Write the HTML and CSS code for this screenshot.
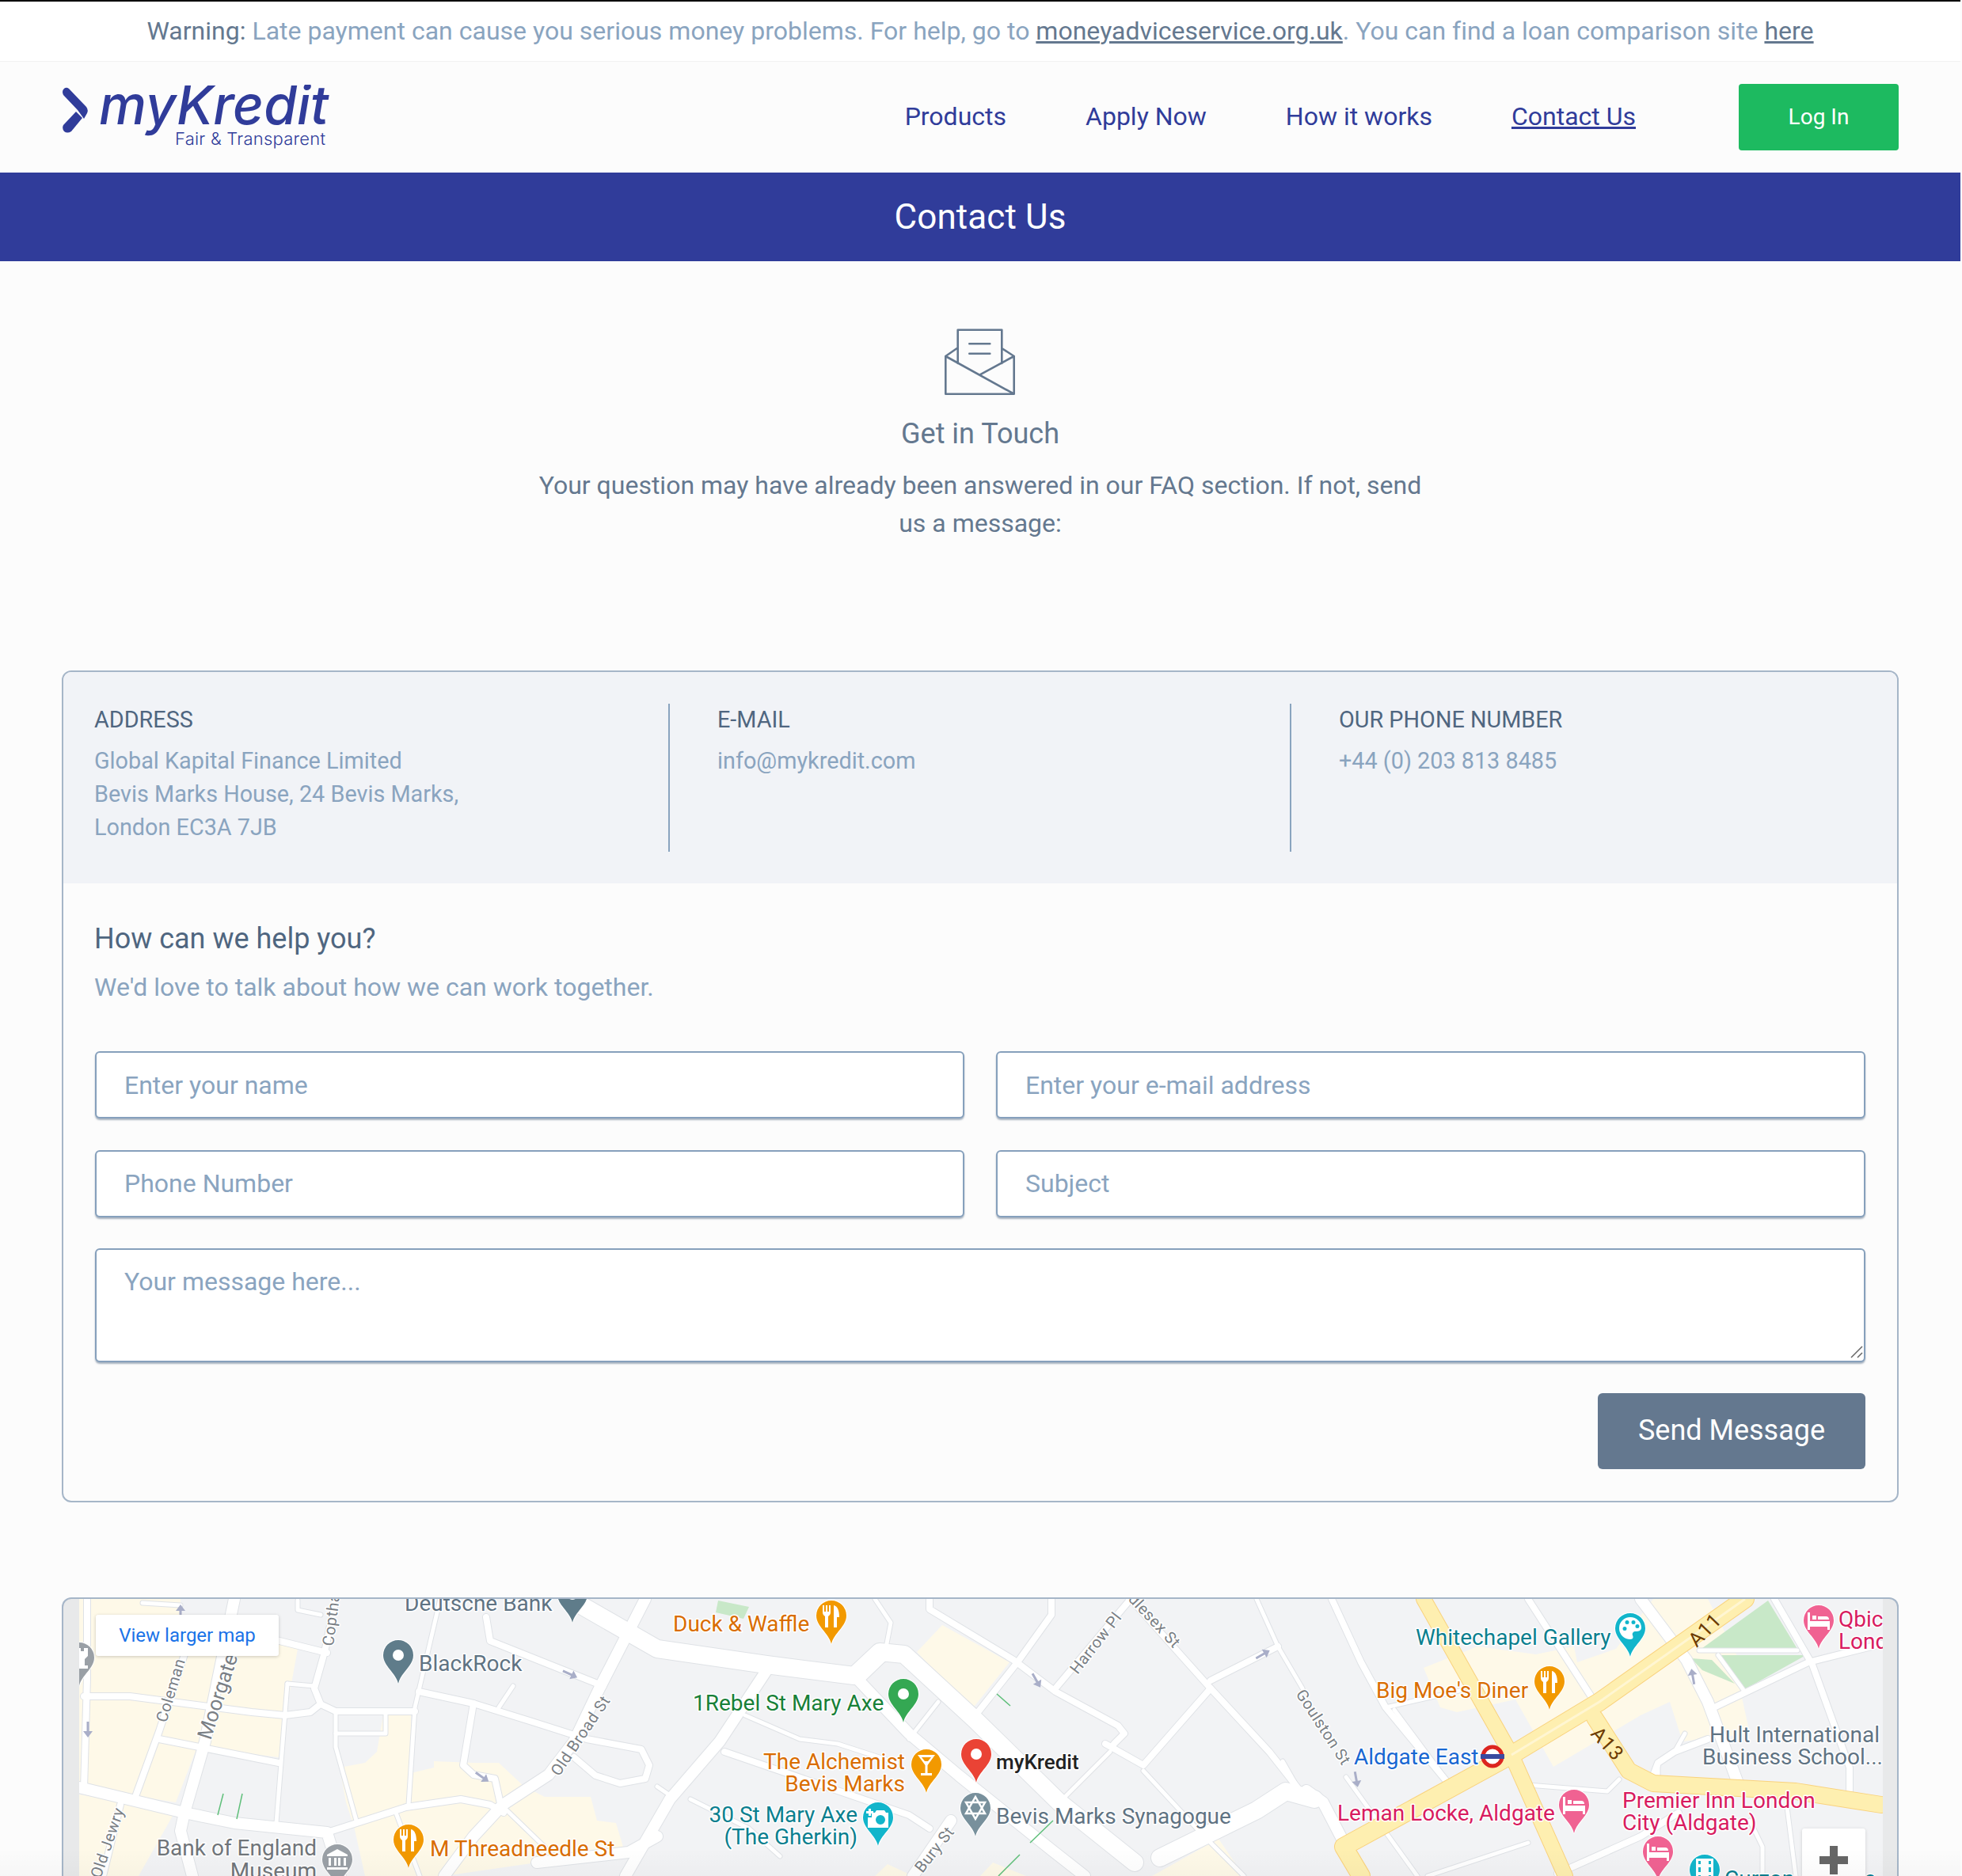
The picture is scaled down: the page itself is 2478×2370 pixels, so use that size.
FILE: index.html
```html
<!DOCTYPE html>
<html lang="en">
<head>
<meta charset="utf-8">
<title>Contact Us - myKredit</title>
<link rel="stylesheet" href="styles.css">
</head>
<body>
<div class="warning">
  <p><strong>Warning:</strong> Late payment can cause you serious money problems. For help, go to <a href="#">moneyadviceservice.org.uk</a>. You can find a loan comparison site <a href="#">here</a></p>
</div>
<header class="site-nav">
  <a class="logo" href="#" aria-label="myKredit">
    <svg width="340" height="84" viewBox="79 107 340 84">
      <path class="logo-fill" d="M80 113Q83 109 87 112L109 135Q112 139 110 143L106 150L98 139L80 120Q78 116 80 113Z"/>
      <path class="logo-fill" d="M96 141L104 149L90 166Q85 169 81 166Q78 162 80 158Z"/>
      <text class="logo-word" x="125" y="157" textLength="290" lengthAdjust="spacingAndGlyphs">myKredit</text>
      <text class="logo-tag" x="221" y="183" textLength="190">Fair &amp; Transparent</text>
    </svg>
  </a>
  <nav class="menu">
    <a href="#">Products</a>
    <a href="#">Apply Now</a>
    <a href="#">How it works</a>
    <a href="#" class="current">Contact Us</a>
  </nav>
  <a class="login" href="#">Log In</a>
</header>
<div class="banner"><h1>Contact Us</h1></div>
<section class="intro">
  <svg class="intro-icon" width="92" height="87" viewBox="0 0 92 87">
    <path d="M2.3 36V83.7H88.7V36M2.3 36L16.7 26M88.7 36L73.3 26M17.7 45V2.7H73.3V45M2.3 36L88.7 83.7M88.7 36L45.7 59.3M32.3 20.3H58.3M32.3 32.7H58.3"/>
  </svg>
  <h2>Get in Touch</h2>
  <p>Your question may have already been answered in our FAQ section. If not, send us a message:</p>
</section>
<main class="wrap">
  <section class="card">
    <div class="details">
      <div class="detail">
        <h3>ADDRESS</h3>
        <p>Global Kapital Finance Limited<br>Bevis Marks House, 24 Bevis Marks,<br>London EC3A 7JB</p>
      </div>
      <div class="detail">
        <h3>E-MAIL</h3>
        <p>info@mykredit.com</p>
      </div>
      <div class="detail">
        <h3>OUR PHONE NUMBER</h3>
        <p>+44 (0) 203 813 8485</p>
      </div>
    </div>
    <form class="form">
      <h2>How can we help you?</h2>
      <p class="lead">We'd love to talk about how we can work together.</p>
      <div class="fields">
        <input type="text" placeholder="Enter your name">
        <input type="text" placeholder="Enter your e-mail address">
        <input type="text" placeholder="Phone Number">
        <input type="text" placeholder="Subject">
        <div class="message">
          <textarea placeholder="Your message here..."></textarea>
          <svg class="grip" width="17" height="16" viewBox="0 0 17 16"><path d="M1 15L15 1M9 15L15 9"/></svg>
        </div>
      </div>
      <div class="actions"><button type="button">Send Message</button></div>
    </form>
  </section>
  <section class="map">
    <svg class="map-canvas" width="2278" height="350" viewBox="100 2020 2278 350">
      <defs>
        <path id="pin" d="M0 0C-3 -14 -19 -22 -19 -36A19 19 0 1 1 19 -36C19 -22 3 -14 0 0Z"/>
        <path id="arrow" d="M-10 -1.5H2V-6L10 0L2 6V1.5H-10Z"/>
        <g id="i-food"><path d="M-11 -49V-40C-11 -37 -9 -36 -8 -35V-21H-4V-35C-3 -36 -1 -37 -1 -40V-49H-3V-41H-5V-49H-7V-41H-9V-49Z"/><path d="M3 -49C8 -48 10 -42 10 -34H7V-21H3Z"/></g>
        <g id="i-bed"><path d="M-14 -46H-11V-35H14V-24H11V-28H-11V-24H-14Z"/><path d="M-8 -42H-3V-37H-8ZM-1 -41H9Q13 -41 13 -37H-1Z"/></g>
        <g id="i-palette"><path fill-rule="evenodd" d="M0 -50A14 14 0 1 0 0 -22C4 -22 4 -25 3 -27C2 -30 4 -32 7 -32C11 -32 14 -33 14 -37C14 -44 8 -50 0 -50ZM-7 -38A2.5 2.5 0 1 0 -7 -33A2.5 2.5 0 1 0 -7 -38ZM-4 -46A2.5 2.5 0 1 0 -4 -41A2.5 2.5 0 1 0 -4 -46ZM4 -46A2.5 2.5 0 1 0 4 -41A2.5 2.5 0 1 0 4 -46ZM9 -41A2.5 2.5 0 1 0 9 -36A2.5 2.5 0 1 0 9 -41Z"/></g>
        <g id="i-cocktail"><path fill-rule="evenodd" d="M-11 -48H11L1.5 -35V-25H7V-22H-7V-25H-1.5V-35ZM-6 -45L-2 -40H2L6 -45Z"/></g>
        <g id="i-camera"><path fill-rule="evenodd" d="M-8 -42H-4L-2 -45H8L10 -42H13V-23H-13V-36H-8ZM3 -39A6 6 0 1 0 3 -27A6 6 0 1 0 3 -39Z"/><path d="M-12 -47H-9V-44H-6V-41H-9V-38H-12V-41H-15V-44H-12Z"/></g>
        <g id="i-star" class="icon-line"><path d="M0 -50L12 -29H-12ZM0 -22L12 -43H-12Z"/></g>
        <g id="i-museum"><path d="M0 -49L13 -42V-40H-13V-42ZM-11 -38H-8V-28H-11ZM-4 -38H-1V-28H-4ZM1 -38H4V-28H1ZM8 -38H11V-28H8ZM-13 -26H13V-23H-13Z"/></g>
        <g id="i-film"><path fill-rule="evenodd" d="M-11 -50H11V-22H-11ZM-8 -47V-43H-5V-47ZM-8 -39V-33H-5V-39ZM-8 -29V-25H-5V-29ZM5 -47V-43H8V-47ZM5 -39V-33H8V-39ZM5 -29V-25H8V-29Z"/></g>
        <g id="i-rook"><path d="M-11 -48H-6V-44H-2V-48H2V-44H6V-48H11V-38L7 -34V-26H11V-22H-11V-26H-7V-34L-11 -38Z"/></g>
        <g id="w5">
          <path d="M180 2025L228 2028"/>
          <path d="M376 2022V2034L405 2040"/>
          <path d="M363 2127L349 2303"/>
          <path d="M363 2127L397 2130"/>
          <path d="M424 2163V2207L450 2300"/>
          <path d="M424 2190H487V2165"/>
          <path d="M556 2020L524 2157L516 2280"/>
          <path d="M500 2290L530 2370"/>
          <path d="M636 2283L700 2345"/>
          <path d="M648 2130L630 2157"/>
          <path d="M941 2167L1010 2197L1058 2203L1132 2227"/>
          <path d="M830 2257L849 2270"/>
          <path d="M872 2273L946 2310L985 2345"/>
          <path d="M1148 2197L1185 2150"/>
          <path d="M1089 2123L1116 2097"/>
          <path d="M1116 2097L1125 2050L1105 2020"/>
          <path d="M1402 2213L1338 2277"/>
          <path d="M1444 2237L1518 2317L1571 2370"/>
          <path d="M1645 2133L1614 2080L1587 2020"/>
          <path d="M1750 2157L1856 2133"/>
          <path d="M1761 2160L1830 2253"/>
          <path d="M1930 2255L2030 2263L2045 2248"/>
          <path d="M2210 2300L2226 2333V2370"/>
          <path d="M2257 2283L2268 2370"/>
          <path d="M1803 2370L1930 2328"/>
          <path d="M2094 2227L2094 2250"/>
          <path d="M2115 2213L2128 2190"/>
          <path d="M2146 2085H2270"/>
          <path d="M2170 2091L2202 2135"/>
          <path d="M1640 2260L1620 2225"/>
          <path d="M1700 2245L1790 2370"/>
        </g>
        <g id="w8">
          <path d="M106 2143H164L318 2163L360 2167L392 2163L402 2155"/>
          <path d="M201 2197L352 2227"/>
          <path d="M233 2090L201 2187L172 2267"/>
          <path d="M349 2072L413 2088"/>
          <path d="M424 2020L410 2087L397 2133L405 2153L424 2162H524"/>
          <path d="M529 2137L598 2152L672 2175L741 2197L810 2210L820 2230L815 2247L783 2253L752 2243L725 2220"/>
          <path d="M598 2152L585 2230L598 2242L625 2247L633 2283"/>
          <path d="M614 2043L619 2073L762 2130"/>
          <path d="M413 2315L513 2283L582 2273L619 2280L636 2290"/>
          <path d="M110 2020V2120L106 2260"/>
          <path d="M152 2280L130 2370"/>
          <path d="M915 2213L1148 2293L1174 2310"/>
          <path d="M1232 2167L1285 2100L1328 2040V2020"/>
          <path d="M1174 2020V2033L1280 2097L1333 2137L1412 2180L1420 2190L1407 2203"/>
          <path d="M1428 2020L1333 2133"/>
          <path d="M1428 2020L1529 2133L1603 2213L1640 2260"/>
          <path d="M1529 2123L1614 2080"/>
          <path d="M1529 2133L1444 2230L1396 2203"/>
          <path d="M1682 2020L1719 2100L1750 2157L1835 2260"/>
          <path d="M1930 2020L2014 2150"/>
          <path d="M2165 2157L2284 2100L2376 2077"/>
          <path d="M2241 2020L2289 2103L2336 2233V2270"/>
          <path d="M2088 2243L2094 2227L2115 2213L2157 2197"/>
          <path d="M1967 2367L2072 2320L2120 2290"/>
          <path d="M1671 2280L1720 2370"/>
        </g>
        <g id="w14">
          <path d="M296 2020L259 2200L233 2290L228 2313L243 2370"/>
          <path d="M100 2258L233 2290L296 2303L413 2315L430 2370"/>
          <path d="M815 2020L757 2133L725 2200L693 2242L635 2280L598 2320L561 2370"/>
          <path d="M678 2353L794 2340L830 2320"/>
          <path d="M973 2103L909 2200L846 2273L790 2370"/>
          <path d="M1079 2117L1148 2190L1211 2243L1328 2337L1370 2370"/>
          <path d="M1201 2300L1153 2370"/>
          <path d="M2072 2020L2130 2097L2157 2150L2194 2250"/>
          <path d="M1650 2262L1671 2277L1697 2327L1719 2370"/>
        </g>
        <g id="w20">
          <path d="M720 2020L830 2083L968 2103L1079 2117L1111 2087L1142 2090L1232 2173L1338 2277L1433 2353"/>
          <path d="M1465 2347L1587 2287L1624 2263L1660 2273"/>
        </g>
        <path id="y-a11" d="M2204 2020L2020 2150L1909 2217L1697 2333L1719 2370"/>
        <path id="y-ns" d="M1798 2020L1909 2217L1977 2370"/>
        <path id="y-a13" d="M2014 2170L2057 2237L2088 2253L2268 2263L2376 2280"/>
      </defs>
      <rect class="m-bg" x="100" y="2020" width="2278" height="350"/>
      <g class="m-beige">
        <polygon points="100,2020 228,2020 228,2040 376,2083 368,2127 360,2167 352,2220 249,2207 222,2277 100,2257"/>
        <polygon points="100,2267 222,2287 175,2370 100,2370"/>
        <polygon points="429,2233 461,2227 476,2213 484,2167 519,2167 519,2240 548,2233 548,2225 598,2227 630,2227 662,2257 688,2270 746,2270 754,2300 778,2303 789,2340 678,2353 561,2370 461,2370 447,2307 437,2277"/>
        <polygon points="1158,2087 1190,2053 1275,2100 1227,2160"/>
        <polygon points="1105,2370 1121,2355 1153,2370"/>
        <polygon points="1238,2370 1254,2353 1296,2370"/>
        <polygon points="1455,2370 1539,2323 1571,2370"/>
        <polygon points="1798,2107 1866,2080 1940,2090 1988,2080 1992,2100 2041,2083 2088,2020 2157,2020 2193,2090 2199,2140 2210,2190 2125,2200 2109,2150 2072,2167 1962,2232 1914,2147 1840,2163 1819,2157"/>
      </g>
      <g class="m-park">
        <polygon points="2233,2022 2270,2083 2146,2085"/>
        <polygon points="2170,2091 2281,2091 2202,2135"/>
        <polygon points="2136,2095 2162,2097 2191,2127 2150,2110"/>
        <polygon points="907,2022 946,2030 939,2045 904,2037"/>
      </g>
      <use href="#w5" class="case c5"/>
      <use href="#w8" class="case c8"/>
      <use href="#w14" class="case c14"/>
      <use href="#w20" class="case c20"/>
      <use href="#w5" class="road r5"/>
      <use href="#w8" class="road r8"/>
      <use href="#w14" class="road r14"/>
      <use href="#w20" class="road r20"/>
      <use href="#y-ns" class="ycase yc18"/>
      <use href="#y-a11" class="ycase yc24"/>
      <use href="#y-a13" class="ycase yc20"/>
      <use href="#y-ns" class="yroad y18"/>
      <use href="#y-a11" class="yroad y24"/>
      <use href="#y-a13" class="yroad y20"/>
      <path class="ydiv" d="M2204 2020L2020 2150L1909 2217"/>
      <g class="m-rail">
        <path d="M282 2266L275 2293M306 2266L299 2298M1259 2140L1276 2155M1330 2300L1301 2328M1288 2343L1261 2370"/>
      </g>
      <g class="m-arrow">
        <use href="#arrow" transform="translate(720 2115) rotate(25)"/>
        <use href="#arrow" transform="translate(609 2245) rotate(35)"/>
        <use href="#arrow" transform="translate(111 2185) rotate(90)"/>
        <use href="#arrow" transform="translate(228 2037) rotate(-90)"/>
        <use href="#arrow" transform="translate(1595 2090) rotate(-30)"/>
        <use href="#arrow" transform="translate(1309 2123) rotate(60)"/>
        <use href="#arrow" transform="translate(2138 2118) rotate(-100)"/>
        <use href="#arrow" transform="translate(1713 2248) rotate(80)"/>
      </g>
      <g class="road-label">
        <text class="big" transform="translate(266 2199) rotate(-72)">Moorgate</text>
        <text transform="translate(210 2177) rotate(-73)">Coleman St</text>
        <text transform="translate(421 2080) rotate(-83)">Copthall Ave</text>
        <text transform="translate(127 2374) rotate(-71)">Old Jewry</text>
        <text transform="translate(706 2245) rotate(-56)">Old Broad St</text>
        <text transform="translate(1165 2367) rotate(-52)">Bury St</text>
        <text transform="translate(1361 2116) rotate(-52)">Harrow Pl</text>
        <text transform="translate(1400 1995) rotate(47)">Middlesex St</text>
        <text transform="translate(1636 2140) rotate(57)">Goulston St</text>
      </g>
      <g class="route-label">
        <text transform="translate(2143 2082) rotate(-46)">A11</text>
        <text transform="translate(2008 2191) rotate(48)">A13</text>
      </g>
      <g class="lbl lbl-slate">
        <text x="511" y="2033">Deutsche Bank</text>
        <text x="529" y="2109">BlackRock</text>
        <text x="1258" y="2302">Bevis Marks Synagogue</text>
        <text x="2374" y="2199" text-anchor="end">Hult International</text>
        <text x="2378" y="2227" text-anchor="end">Business School...</text>
      </g>
      <g class="lbl lbl-grey">
        <text x="400" y="2342" text-anchor="end">Bank of England</text>
        <text x="400" y="2371" text-anchor="end">Museum</text>
      </g>
      <g class="lbl lbl-orange">
        <text x="543" y="2343">M Threadneedle St</text>
        <text x="850" y="2059">Duck &amp; Waffle</text>
        <text x="1143" y="2233" text-anchor="end">The Alchemist</text>
        <text x="1143" y="2261" text-anchor="end">Bevis Marks</text>
        <text x="1738" y="2143">Big Moe's Diner</text>
      </g>
      <g class="lbl lbl-green"><text x="875" y="2159">1Rebel St Mary Axe</text></g>
      <g class="lbl lbl-dark"><text x="1258" y="2233">myKredit</text></g>
      <g class="lbl lbl-teal">
        <text x="1083" y="2300" text-anchor="end">30 St Mary Axe</text>
        <text x="1083" y="2328" text-anchor="end">(The Gherkin)</text>
        <text x="1788" y="2076">Whitechapel Gallery</text>
        <text x="2178" y="2381">Curzon Aldgate</text>
      </g>
      <g class="lbl lbl-blue"><text x="1710" y="2227">Aldgate East</text></g>
      <g class="lbl lbl-pink">
        <text x="2322" y="2053">Qbic Hotel</text>
        <text x="2322" y="2081">London</text>
        <text x="1689" y="2298">Leman Locke, Aldgate</text>
        <text x="2049" y="2282">Premier Inn London</text>
        <text x="2049" y="2310">City (Aldgate)</text>
      </g>
      <g class="tube">
        <circle cx="1885" cy="2219" r="12"/>
        <rect x="1870" y="2216" width="30" height="6"/>
      </g>
      <g class="pin p-grey"><use href="#pin" transform="translate(100 2130)"/><use class="ic" href="#i-rook" transform="translate(100 2130)"/></g>
      <g class="pin p-slate"><use href="#pin" transform="translate(723 2050)"/><circle class="ic" cx="723" cy="2014" r="7"/></g>
      <g class="pin p-slate"><use href="#pin" transform="translate(503 2127)"/><circle class="ic" cx="503" cy="2091" r="7"/></g>
      <g class="pin p-grey"><use href="#pin" transform="translate(426 2385)"/><use class="ic" href="#i-museum" transform="translate(426 2385)"/></g>
      <g class="pin p-orange"><use href="#pin" transform="translate(516 2360)"/><use class="ic" href="#i-food" transform="translate(516 2360)"/></g>
      <g class="pin p-orange"><use href="#pin" transform="translate(1050 2077)"/><use class="ic" href="#i-food" transform="translate(1050 2077)"/></g>
      <g class="pin p-green"><use href="#pin" transform="translate(1141 2176)"/><circle class="ic" cx="1141" cy="2140" r="7"/></g>
      <g class="pin p-orange"><use href="#pin" transform="translate(1170 2265)"/><use class="ic" href="#i-cocktail" transform="translate(1170 2265)"/></g>
      <g class="pin p-red"><use href="#pin" transform="translate(1233 2252)"/><circle class="ic" cx="1233" cy="2216" r="7"/></g>
      <g class="pin p-cyan"><use href="#pin" transform="translate(1109 2332)"/><use class="ic" href="#i-camera" transform="translate(1109 2332)"/></g>
      <g class="pin p-slate2"><use href="#pin" transform="translate(1232 2320)"/><use href="#i-star" transform="translate(1232 2320)"/></g>
      <g class="pin p-cyan"><use href="#pin" transform="translate(2059 2093)"/><use class="ic" href="#i-palette" transform="translate(2059 2093)"/></g>
      <g class="pin p-orange"><use href="#pin" transform="translate(1957 2160)"/><use class="ic" href="#i-food" transform="translate(1957 2160)"/></g>
      <g class="pin p-pink"><use href="#pin" transform="translate(2297 2083)"/><use class="ic" href="#i-bed" transform="translate(2297 2083)"/></g>
      <g class="pin p-pink"><use href="#pin" transform="translate(1988 2316)"/><use class="ic" href="#i-bed" transform="translate(1988 2316)"/></g>
      <g class="pin p-pink"><use href="#pin" transform="translate(2094 2375)"/><use class="ic" href="#i-bed" transform="translate(2094 2375)"/></g>
      <g class="pin p-cyan"><use href="#pin" transform="translate(2153 2398)"/><use class="ic" href="#i-film" transform="translate(2153 2398)"/></g>
    </svg>
    <a class="larger" href="#">View larger map</a>
    <div class="zoom-ctl"><span class="plus"></span></div>
  </section>
</main>
<div class="page-fade"></div>
</body>
</html>
```
FILE: styles.css
```css
* { box-sizing: border-box; }
html, body { margin: 0; height: 2370px; overflow: hidden; }
html { background: #fcfcfc; }
body { position: relative; width: 2476px; font-family: Roboto, "Liberation Sans", sans-serif; color: #64788f; }

.warning { width: 2478px; height: 78px; padding: 0 2px 2px 0; background: #fff; border-top: 2px solid #000; border-bottom: 1px solid #f1f1f1; display: flex; align-items: center; justify-content: center; }
.warning p { margin: 0; font-size: 32px; line-height: 48px; letter-spacing: .01px; color: #8aa4bf; }
.warning strong { font-weight: 400; color: #64788f; }
.warning a { color: #64788f; }

.site-nav { height: 140px; padding: 0 78px 0 79px; display: flex; align-items: center; }
.logo { display: block; height: 84px; margin-top: 2px; }
.logo svg { display: block; }
.logo-fill { fill: #303c9a; }
.logo-word { font-family: Inter, sans-serif; font-size: 68px; font-weight: 500; font-style: italic; fill: #303c9a; }
.logo-tag { font-family: Inter, sans-serif; font-size: 22px; font-weight: 300; fill: #303c9a; }
.menu { margin-left: auto; margin-top: -2px; display: flex; gap: 100px; }
.menu a { font-size: 32px; line-height: 48px; color: #303c9a; text-decoration: none; }
.menu a.current { text-decoration: underline; }
.login { margin-left: 130px; width: 202px; height: 84px; border-radius: 4px; background: #1dba60; color: #fff; font-size: 28px; text-decoration: none; display: flex; align-items: center; justify-content: center; padding-bottom: 2px; }

.banner { width: 2477px; padding-right: 1px; height: 112px; background: #303c9a; display: flex; align-items: center; justify-content: center; }
.banner h1 { margin: 0; color: #fff; font-size: 44px; font-weight: 400; letter-spacing: .1px; line-height: 66px; }

.intro { height: 517px; padding-top: 84px; text-align: center; }
.intro-icon { display: block; margin: 0 auto; }
.intro-icon path { fill: none; stroke: #64788f; stroke-width: 2.6; stroke-linejoin: round; stroke-linecap: round; }
.intro h2 { margin: 20px 0 0; font-size: 36px; font-weight: 400; line-height: 54px; }
.intro p { width: 1140px; margin: 14px auto 0; font-size: 32px; line-height: 48px; }

.wrap { width: 2320px; margin: 0 auto; }
.card { border: 2px solid #a6b6c8; border-radius: 12px; overflow: hidden; }
.details { background: #f1f3f7; padding: 40px 40px 40px 39px; display: grid; grid-template-columns: 727px 785px 1fr; }
.detail { min-height: 187px; }
.detail + .detail { padding-left: 60px; }
.detail:not(:last-child) { border-right: 2px solid #8aa4bf; }
.detail h3 { margin: 0 0 11px; font-size: 28.8px; font-weight: 400; line-height: 40px; color: #4f6680; }
.detail p { margin: 0; font-size: 28.8px; line-height: 42px; color: #8aa4bf; }

.form { padding: 43px 40px 40px 39px; }
.form h2 { margin: 0; font-size: 36px; font-weight: 400; line-height: 54px; color: #4f6680; }
.lead { margin: 10px 0 57px; font-size: 32px; line-height: 48px; color: #8aa4bf; }
.fields { margin-left: 1px; display: grid; grid-template-columns: 1fr 1fr; gap: 39.5px 40px; }
.fields input, .fields textarea { display: block; width: 100%; height: 85px; padding: 0 35px; border: 2px solid #86a0bc; border-radius: 6px; background: #fff; font-family: inherit; font-size: 32px; color: #64788f; outline: none; box-shadow: 0 2px 2px rgba(100, 120, 143, .55); }
.message { grid-column: 1 / -1; position: relative; }
.fields textarea { height: 144px; padding-top: 16px; line-height: 48px; resize: none; }
.grip { position: absolute; right: 2px; bottom: 5px; }
.grip path { fill: none; stroke: #666; stroke-width: 1.5px; }
.fields ::placeholder { color: #8aa4bf; opacity: 1; }
.actions { display: flex; justify-content: flex-end; margin-top: 39px; }
.actions button { width: 338px; height: 96px; border: 0; border-radius: 6px; background: #64788f; color: #fff; font-family: inherit; font-size: 36px; font-weight: 400; padding-bottom: 4px; }

.map { position: relative; height: 352px; margin-top: 120px; padding: 0 18px 0 20px; border: 2px solid #a6b6c8; border-bottom: 0; border-radius: 12px 12px 0 0; background: #e8e9ea; overflow: hidden; }
.map-canvas { display: block; }
.m-bg { fill: #f2f3f5; }
.m-beige polygon { fill: #fef9e8; }
.m-park polygon { fill: #c8e8c8; }
.case, .road, .ycase, .yroad { fill: none; stroke-linejoin: round; stroke-linecap: round; }
.case { stroke: #dfe2e6; }
.road { stroke: #fff; }
.c5 { stroke-width: 7px; } .r5 { stroke-width: 5px; }
.c8 { stroke-width: 10px; } .r8 { stroke-width: 8px; }
.c14 { stroke-width: 16px; } .r14 { stroke-width: 14px; }
.c20 { stroke-width: 24px; } .r20 { stroke-width: 22px; }
.ycase { stroke: #f9d27d; }
.yroad { stroke: #feefb0; }
.yc18 { stroke-width: 20px; } .y18 { stroke-width: 18px; }
.yc24 { stroke-width: 24px; } .y24 { stroke-width: 22px; }
.yc20 { stroke-width: 22px; } .y20 { stroke-width: 20px; }
.ydiv { fill: none; stroke: #fff6d2; stroke-width: 3px; }
.m-rail path { fill: none; stroke: #5fbf7a; stroke-width: 1.5px; }
.m-arrow { fill: #a9aec8; }
.road-label text { font-family: Roboto, sans-serif; font-size: 20px; letter-spacing: .5px; fill: #7a7f85; paint-order: stroke; stroke: #fff; stroke-width: 3px; stroke-linejoin: round; }
.road-label text.big { font-size: 26px; letter-spacing: 0; }
.route-label text { font-family: Roboto, sans-serif; font-size: 25px; letter-spacing: 1px; fill: #6b3a00; }
.lbl { transform: translateY(1.5px); }
.lbl text { font-family: Roboto, sans-serif; font-size: 28px; paint-order: stroke; stroke: #fff; stroke-width: 3px; stroke-linejoin: round; }
.lbl-slate text { fill: #5f7383; }
.lbl-grey text { fill: #70757a; }
.lbl-orange text { fill: #d96d00; }
.lbl-green text { fill: #188038; }
.lbl-dark text { fill: #222; font-weight: 500; font-size: 26px; }
.lbl-teal text { fill: #0b7f8f; }
.lbl-blue text { fill: #1967d2; }
.lbl-pink text { fill: #d81b60; }
.tube circle { fill: #fff; stroke: #dc241f; stroke-width: 5px; }
.tube rect { fill: #3a4a9f; }
.pin use:first-child { stroke: #fff; stroke-width: 2px; paint-order: stroke; }
.pin .ic { fill: #fff; }
.icon-line path { fill: none; stroke: #fff; stroke-width: 2.5px; }
.p-grey { fill: #9aa0a6; }
.p-slate { fill: #5f7c8a; }
.p-slate2 { fill: #78909c; }
.p-orange { fill: #f29900; }
.p-green { fill: #34a853; }
.p-red { fill: #ea4335; }
.p-cyan { fill: #12b5cb; }
.p-pink { fill: #f06292; }
.larger { position: absolute; left: 41px; top: 20px; width: 231px; height: 52px; background: #fff; border-radius: 3px; box-shadow: 0 1px 4px rgba(0, 0, 0, .2); color: #1a73e8; font-size: 24px; line-height: 52px; text-align: center; text-decoration: none; }
.zoom-ctl { position: absolute; left: 2196px; top: 290px; width: 80px; height: 62px; background: #fff; border-radius: 3px 3px 0 0; box-shadow: 0 1px 4px rgba(0, 0, 0, .15); }
.plus { position: absolute; left: 22px; top: 22px; width: 36px; height: 36px; background: linear-gradient(#666, #666) center / 36px 10px no-repeat, linear-gradient(#666, #666) center / 10px 36px no-repeat; }
.page-fade { position: absolute; left: 0; right: -2px; top: 2335px; height: 35px; background: linear-gradient(rgba(0, 0, 0, 0), rgba(0, 0, 0, .025)); pointer-events: none; }
```
